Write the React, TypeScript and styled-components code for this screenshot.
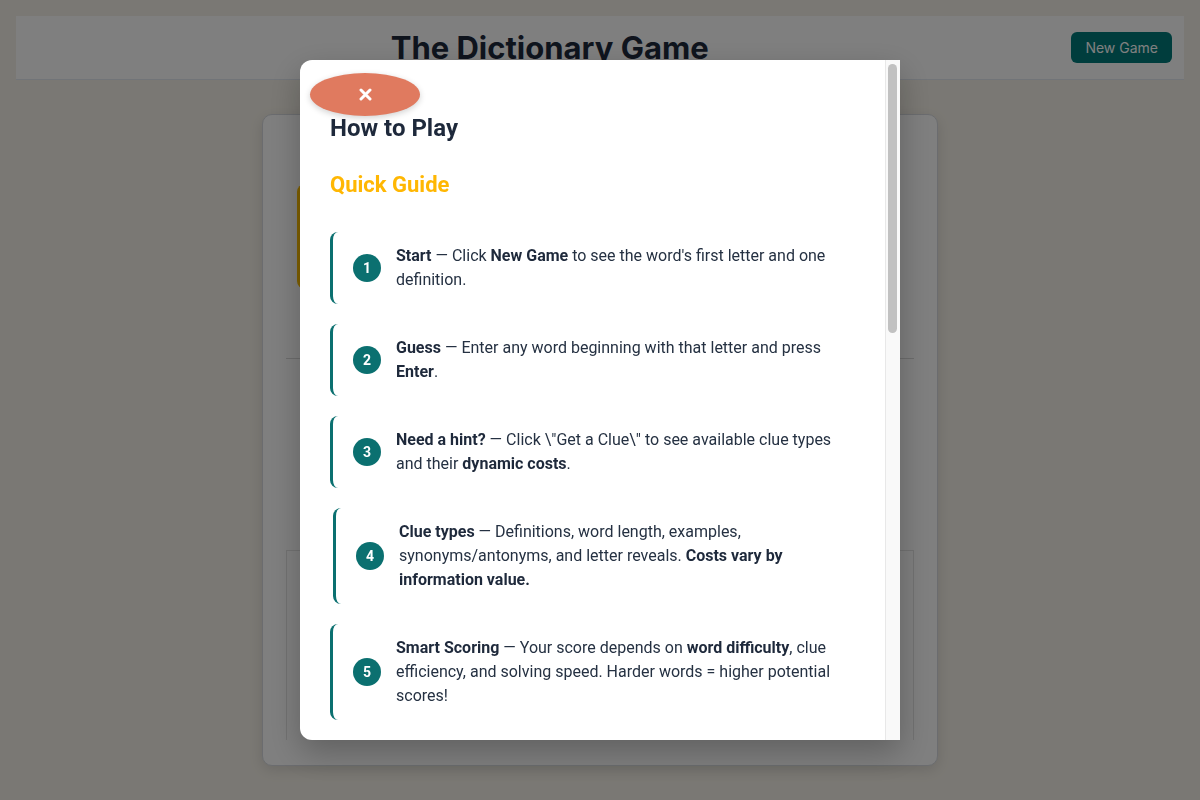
import React from "react";
import styled, { createGlobalStyle } from "styled-components";

const Global = createGlobalStyle`
  html, body { margin: 0; padding: 0; }
  body {
    background: #f5f1e8;
    font-family: Roboto, "Liberation Sans", Arial, sans-serif;
  }
  * { box-sizing: border-box; }
`;

const Page = styled.div`
  padding: 16px;
  min-height: 800px;
`;

const Header = styled.header`
  height: 64px;
  background: #ffffff;
  border-bottom: 1px solid #e2e8f0;
  display: flex;
  align-items: center;
  padding: 0 12px;
`;

const Title = styled.h1`
  flex: 1;
  margin: 0;
  text-align: center;
  font-family: Inter, "Liberation Sans", sans-serif;
  font-weight: 700;
  font-size: 31px;
  color: #1e293b;
`;

const HeaderButton = styled.button`
  background: #007a7a;
  color: #ffffff;
  border: none;
  border-radius: 6px;
  padding: 0 14px;
  height: 31px;
  font-family: Inter, "Liberation Sans", sans-serif;
  font-size: 14px;
  cursor: pointer;
`;

const GameCard = styled.main`
  width: 676px;
  height: 652px;
  margin: 34px auto 0;
  background: #ffffff;
  border: 1px solid #d6d9de;
  border-radius: 10px;
  box-shadow: 0 4px 14px rgba(0, 0, 0, 0.12);
  padding: 23px;
  display: flex;
  flex-direction: column;
`;

const WordArea = styled.section`
  height: 221px;
  padding-top: 46px;
  border-bottom: 1px solid #d9d9d9;
`;

const WordBox = styled.div`
  margin-left: 11px;
  height: 105px;
  border-left: 5px solid #ffc000;
  border-radius: 8px;
  background: #ffffff;
`;

const GuessArea = styled.section`
  height: 191px;
`;

const CluePanel = styled.section`
  height: 190px;
  border: 1px solid #e4e4e4;
  border-bottom: none;
  background: #fefefe;
`;

const Overlay = styled.div`
  position: fixed;
  inset: 0;
  background: rgba(0, 0, 0, 0.5);
  display: flex;
  align-items: center;
  justify-content: center;
`;

const Modal = styled.div`
  position: relative;
  width: 600px;
  height: 85vh;
  display: flex;
  overflow: hidden;
  background: #ffffff;
  border-radius: 12px 0 0 12px;
  box-shadow: 0 12px 32px rgba(0, 0, 0, 0.25);
`;

const ModalScroll = styled.div`
  position: relative;
  flex: 1;
  overflow: hidden;
  padding: 30px;
`;

const ScrollTrack = styled.div`
  width: 15px;
  flex-shrink: 0;
  background: #f9f9f9;
  border-left: 1px solid #e8e8e8;
  padding: 4px 3px 0 2px;
`;

const ScrollThumb = styled.div`
  height: 269px;
  background: #c1c1c1;
  border-radius: 5px;
`;

const CloseButton = styled.button`
  position: absolute;
  top: 13px;
  left: 10px;
  width: 110px;
  height: 43px;
  border: none;
  border-radius: 50%;
  background: #e07a5f;
  box-shadow: 0 2px 6px rgba(0, 0, 0, 0.18);
  display: flex;
  align-items: center;
  justify-content: center;
  cursor: pointer;
  padding: 0;
`;

const ModalTitle = styled.h2`
  margin: 24px 0 0;
  font-size: 24px;
  line-height: 1.2;
  font-weight: 700;
  color: #1e293b;
`;

const SectionTitle = styled.h3`
  margin: 29px 0 0;
  font-size: 22px;
  line-height: 1.2;
  font-weight: 700;
  color: #ffb703;
`;

const StepList = styled.ol`
  list-style: none;
  margin: 34px 0 0;
  padding: 0;
  display: flex;
  flex-direction: column;
  gap: 20px;
`;

const Step = styled.li<{ $shifted?: boolean }>`
  display: flex;
  align-items: center;
  gap: 15px;
  padding: 12px 16px 12px 20px;
  border-left: 3px solid #0b7070;
  border-radius: 8px;
  transform: ${(p) => (p.$shifted ? "translateX(3px)" : "none")};
`;

const StepNumber = styled.span`
  flex-shrink: 0;
  width: 28px;
  height: 28px;
  border-radius: 50%;
  background: #0b7070;
  color: #ffffff;
  font-size: 14px;
  font-weight: 700;
  display: flex;
  align-items: center;
  justify-content: center;
`;

const StepText = styled.p`
  margin: 0;
  font-size: 16px;
  line-height: 24px;
  color: #253142;

  strong {
    font-weight: 700;
    color: #1e293b;
  }
`;

const steps: { content: React.ReactNode; shifted?: boolean }[] = [
  {
    content: (
      <>
        <strong>Start</strong> — Click <strong>New Game</strong> to see the word's first letter and one definition.
      </>
    ),
  },
  {
    content: (
      <>
        <strong>Guess</strong> — Enter any word beginning with that letter and press <strong>Enter</strong>.
      </>
    ),
  },
  {
    content: (
      <>
        <strong>Need a hint?</strong> — Click {'\\"Get a Clue\\"'} to see available clue types and their{" "}
        <strong>dynamic costs</strong>.
      </>
    ),
  },
  {
    content: (
      <>
        <strong>Clue types</strong> — Definitions, word length, examples, synonyms/antonyms, and letter reveals.{" "}
        <strong>Costs vary by information value.</strong>
      </>
    ),
    shifted: true,
  },
  {
    content: (
      <>
        <strong>Smart Scoring</strong> — Your score depends on <strong>word difficulty</strong>, clue efficiency, and
        solving speed. Harder words = higher potential scores!
      </>
    ),
  },
];

export default function App() {
  return (
    <>
      <Global />
      <Page>
        <Header>
          <Title>The Dictionary Game</Title>
          <HeaderButton>New Game</HeaderButton>
        </Header>
        <GameCard>
          <WordArea>
            <WordBox />
          </WordArea>
          <GuessArea />
          <CluePanel />
        </GameCard>
      </Page>
      <Overlay>
        <Modal>
          <ModalScroll>
            <CloseButton aria-label="Close">
              <svg width="13" height="13" viewBox="0 0 13 13">
                <path d="M2 2 L11 11 M11 2 L2 11" stroke="#ffffff" strokeWidth="3" strokeLinecap="round" />
              </svg>
            </CloseButton>
            <ModalTitle>How to Play</ModalTitle>
            <SectionTitle>Quick Guide</SectionTitle>
            <StepList>
              {steps.map((s, i) => (
                <Step key={i} $shifted={s.shifted}>
                  <StepNumber>{i + 1}</StepNumber>
                  <StepText>{s.content}</StepText>
                </Step>
              ))}
            </StepList>
          </ModalScroll>
          <ScrollTrack>
            <ScrollThumb />
          </ScrollTrack>
        </Modal>
      </Overlay>
    </>
  );
}
